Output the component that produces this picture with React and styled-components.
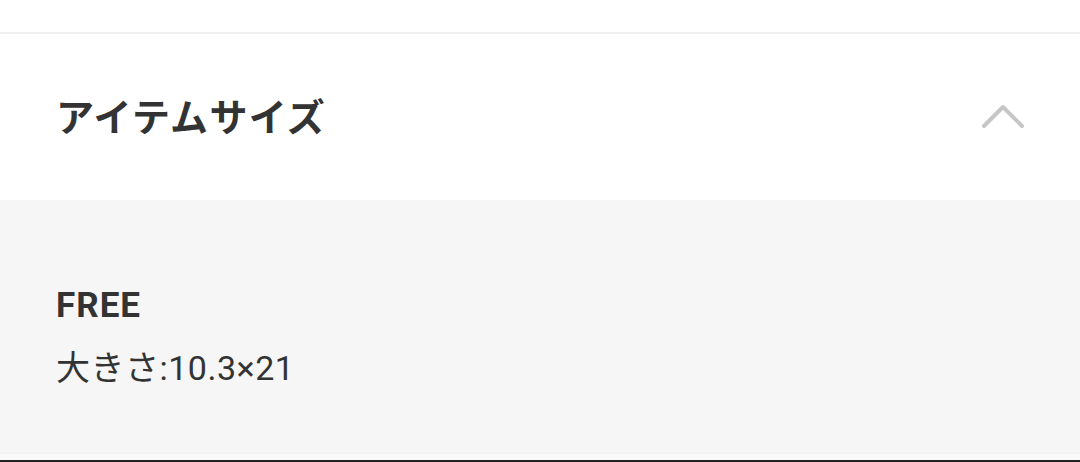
import styled, { createGlobalStyle } from "styled-components";

const GlobalStyle = createGlobalStyle`
	html, body {
		margin: 0;
		padding: 0;
		background: #ffffff;
	}
	body {
		font-family: Roboto, "Noto Sans CJK JP", sans-serif;
		color: #333333;
	}
`;

export default function App() {
	return (
		<Page>
			<GlobalStyle />
			<TopSpace />
			<Section>
				<Header>
					<Title>アイテムサイズ</Title>
					<Chevron viewBox="0 0 44 26" aria-hidden="true">
						<polyline points="3,23 22,4 41,23" />
					</Chevron>
				</Header>
				<Body>
					<SizeName>FREE</SizeName>
					<SizeDetail>大きさ:10.3×21</SizeDetail>
				</Body>
			</Section>
			<BottomEdge />
		</Page>
	);
}

const Page = styled.div`
	width: 1080px;
	height: 462px;
	overflow: hidden;
	display: flex;
	flex-direction: column;
`;

const TopSpace = styled.div`
	height: 32px;
	background: #ffffff;
	border-bottom: 2px solid #efefef;
`;

const Section = styled.section`
	display: flex;
	flex-direction: column;
	flex: 1;
`;

const Header = styled.div`
	height: 166px;
	display: flex;
	align-items: center;
	justify-content: space-between;
	padding: 0 56px;
	background: #ffffff;
`;

const Title = styled.h2`
	margin: 0;
	font-family: "Noto Sans CJK JP", sans-serif;
	font-size: 38px;
	font-weight: 700;
	letter-spacing: 1.3px;
	color: #333333;
	line-height: 1;
	margin-top: -4px;
`;

const Chevron = styled.svg`
	width: 44px;
	height: 26px;
	margin-right: -1px;
	margin-top: -2px;

	polyline {
		fill: none;
		stroke: #c6c6c6;
		stroke-width: 4;
		stroke-linecap: round;
		stroke-linejoin: round;
	}
`;

const Body = styled.div`
	flex: 1;
	background: #f6f6f6;
	padding: 86px 56px 0;
	display: flex;
	flex-direction: column;
	gap: 22px;
`;

const SizeName = styled.p`
	margin: 0;
	font-size: 35px;
	font-weight: 700;
	letter-spacing: 1px;
	line-height: 40px;
	color: #333333;
`;

const SizeDetail = styled.p`
	margin: 0;
	font-size: 34px;
	font-weight: 400;
	letter-spacing: 0.5px;
	line-height: 40px;
	color: #333333;
`;

const BottomEdge = styled.div`
	height: 10px;
	background: #f9f9f9;
	border-top: 2px solid #f2f2f2;
	border-bottom: 2px solid #222222;
	box-sizing: border-box;
`;
